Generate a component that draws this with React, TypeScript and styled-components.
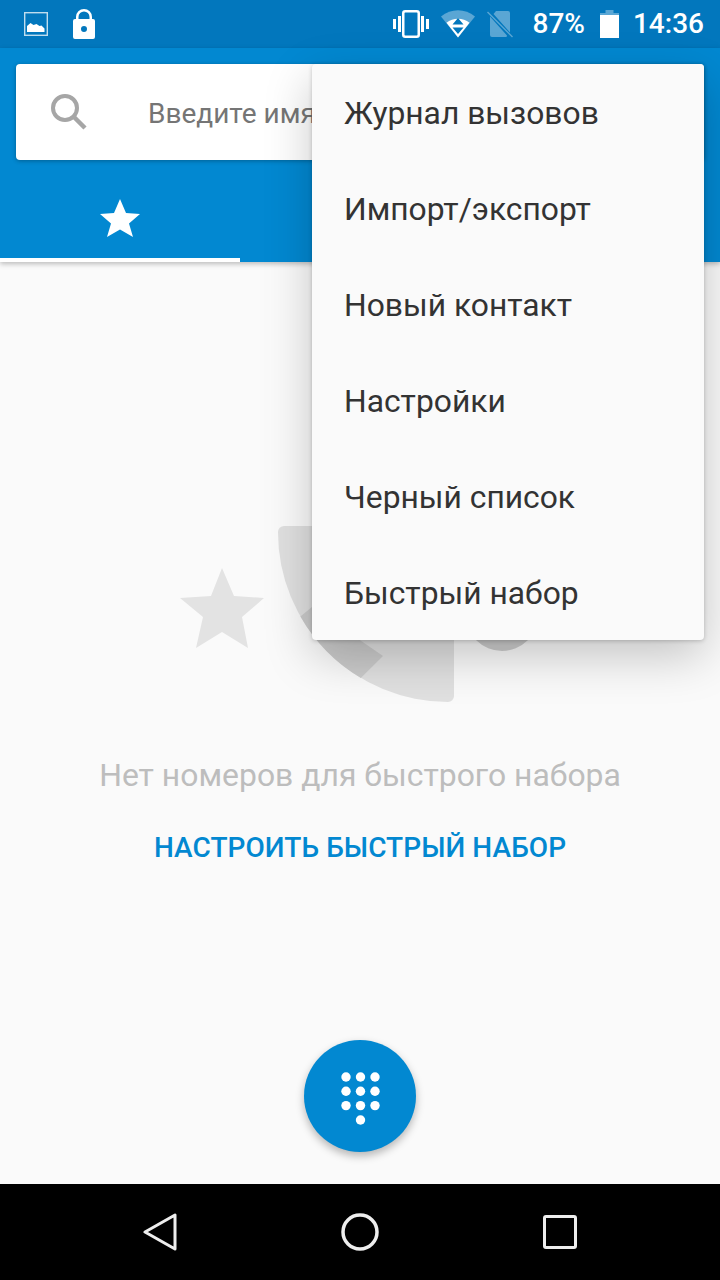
import React, { FC } from 'react';
import styled, { createGlobalStyle } from 'styled-components';

const GlobalStyle = createGlobalStyle`
  html, body {
    margin: 0;
    padding: 0;
    background: #fafafa;
  }
  * {
    box-sizing: border-box;
  }
`;

const Screen = styled.div`
  position: relative;
  display: flex;
  flex-direction: column;
  width: 720px;
  height: 1280px;
  overflow: hidden;
  background: #fafafa;
  font-family: Roboto, "Noto Sans", sans-serif;
`;

const StatusBar = styled.div`
  display: flex;
  align-items: center;
  justify-content: space-between;
  flex: none;
  height: 48px;
  padding: 0 13px 0 24px;
  background: #0277bd;
  color: #fff;
`;

const StatusGroup = styled.div<{ $gap: number }>`
  display: flex;
  align-items: center;
  gap: ${(p) => p.$gap}px;
`;

const StatusText = styled.span<{ $left: number }>`
  margin: 0 3px 0 ${(p) => p.$left}px;
  font-size: 28px;
  font-weight: 500;
  line-height: 48px;
`;

const Header = styled.header`
  position: relative;
  z-index: 1;
  flex: none;
  height: 214px;
  padding-top: 16px;
  background: #0288d1;
  box-shadow: 0 2px 5px rgba(0, 0, 0, 0.25);
`;

const SearchBox = styled.div`
  display: flex;
  align-items: center;
  height: 96px;
  margin: 0 16px;
  padding-left: 35px;
  border-radius: 4px;
  background: #fff;
  box-shadow: 0 1px 4px rgba(0, 0, 0, 0.3);
`;

const SearchHint = styled.span`
  margin-left: 61px;
  padding-top: 2px;
  font-size: 28px;
  color: #757575;
  white-space: nowrap;
`;

const Tabs = styled.div`
  display: grid;
  grid-template-columns: repeat(3, 240px);
  height: 102px;
`;

const Tab = styled.div<{ $active?: boolean }>`
  display: flex;
  align-items: center;
  justify-content: center;
  padding-top: 18px;
  border-bottom: 4px solid ${(p) => (p.$active ? '#fff' : 'transparent')};
`;

const Content = styled.main`
  display: flex;
  flex: 1;
  flex-direction: column;
  align-items: center;
  padding-top: 264px;
`;

const EmptyText = styled.p`
  margin: 49px 0 0;
  font-size: 31.9px;
  line-height: 48px;
  color: #bdbdbd;
`;

const SetupLink = styled.a`
  margin-top: 25px;
  font-size: 28px;
  font-weight: 500;
  line-height: 48px;
  letter-spacing: 0.06px;
  color: #0288d1;
`;

const Fab = styled.button`
  position: absolute;
  left: 304px;
  top: 1040px;
  display: flex;
  align-items: center;
  justify-content: center;
  width: 112px;
  height: 112px;
  padding: 5px 0 0;
  border: 0;
  border-radius: 50%;
  background: #0288d1;
  box-shadow: 0 4px 8px rgba(0, 0, 0, 0.28);
`;

const NavBar = styled.nav`
  display: grid;
  flex: none;
  grid-template-columns: 80px 1fr 80px;
  align-items: center;
  justify-items: center;
  height: 96px;
  padding: 0 120px;
  background: #000;
`;

const Menu = styled.ul`
  position: absolute;
  z-index: 2;
  left: 312px;
  top: 64px;
  width: 392px;
  margin: 0;
  padding: 0;
  list-style: none;
  border-radius: 4px;
  background: #fafafa;
  box-shadow: 0 16px 48px rgba(0, 0, 0, 0.22), 0 1px 4px rgba(0, 0, 0, 0.2);
`;

const MenuItem = styled.li`
  height: 96px;
  padding-left: 32px;
  font-size: 31.8px;
  line-height: 98px;
  color: #333;
`;

const menuItems = [
  'Журнал вызовов',
  'Импорт/экспорт',
  'Новый контакт',
  'Настройки',
  'Черный список',
  'Быстрый набор',
];

const ImageIcon: FC = () => (
  <svg width="24" height="24" viewBox="0 0 24 24">
    <rect x="0.7" y="0.7" width="22.6" height="22.6" fill="none" stroke="#fff" strokeOpacity="0.75" strokeWidth="1.4" />
    <path d="M3 20v-6l3.500-3 3 2 3-1 3 2 2-.5 3 3v3.500z" fill="#fff" />
  </svg>
);

const LockIcon: FC = () => (
  <svg width="22" height="30" viewBox="0 0 22 30">
    <path
      fillRule="evenodd"
      fill="#fff"
      d="M3 10V8a8 8 0 0 1 16 0v2h1a2 2 0 0 1 2 2v16a2 2 0 0 1-2 2H2a2 2 0 0 1-2-2V12a2 2 0 0 1 2-2zM5.500 10h11V8a5.500 5.500 0 0 0-11 0zM11 17a3 3 0 1 0 0 6 3 3 0 0 0 0-6z"
    />
  </svg>
);

const VibrateIcon: FC = () => (
  <svg width="36" height="28" viewBox="0 0 36 28" fill="#fff">
    <rect x="0" y="9" width="3" height="10" />
    <rect x="5" y="6" width="3" height="16" />
    <rect x="28" y="6" width="3" height="16" />
    <rect x="33" y="9" width="3" height="10" />
    <rect x="10.250" y="1.250" width="15.500" height="25.500" rx="2" fill="none" stroke="#fff" strokeWidth="2.500" />
  </svg>
);

const WifiIcon: FC = () => (
  <svg width="34" height="28" viewBox="0 0 34 28">
    <path d="M0 6.500C10 -2 24 -2 34 6.500L17 27.500z" fill="#fff" fillOpacity="0.35" />
    <path d="M5.500 12.700C12 7.300 22 7.300 28.500 12.700L17 27.500z" fill="#fff" />
    <path d="M17 8l5.500 6.500H11.500zM17 24l-5.500-6.500h11z" fill="#0277bd" />
  </svg>
);

const NoSimIcon: FC = () => (
  <svg width="26" height="28" viewBox="0 0 26 28">
    <path d="M9 1h12a2 2 0 0 1 2 2v19.500L6.500 4z M3 6.500L20 25.500 19.500 27H5a2 2 0 0 1-2-2z" fill="#fff" fillOpacity="0.35" />
    <path d="M0.500 2l25 25" stroke="#fff" strokeOpacity="0.35" strokeWidth="1.500" />
  </svg>
);

const BatteryIcon: FC = () => (
  <svg width="19" height="28" viewBox="0 0 19 28">
    <path d="M5.500 0h8v3h5.500v25H0V3h5.500z" fill="#fff" fillOpacity="0.35" />
    <rect x="0" y="5" width="19" height="23" fill="#fff" />
  </svg>
);

const SearchIcon: FC = () => (
  <svg width="36" height="36" viewBox="0 0 36 36" fill="none" stroke="#a6a6a6">
    <circle cx="14" cy="14" r="12" strokeWidth="4" />
    <path d="M23 23l11 11" strokeWidth="4.500" />
  </svg>
);

const StarIcon: FC = () => (
  <svg width="40" height="38" viewBox="0 0 40 38">
    <path d="M20 0l6 14 14 1-11 9.500L33 38 20 30.500 7 38l4-13.500L0 15l14-1z" fill="#fff" />
  </svg>
);

const EmptyArt: FC = () => (
  <svg width="360" height="176" viewBox="0 0 360 176">
    <path d="M42 42L31 70 0 72 23 91 16 122 42 106 68 122 62 91 84 72 54 70z" fill="#e3e3e3" />
    <path d="M98 6a6 6 0 0 1 6-6H274V170a6 6 0 0 1-6 6A170 170 0 0 1 98 6z" fill="#e0e0e0" />
    <path d="M120.400 90.500A170 170 0 0 0 180.800 152L203 130 132 81z" fill="#cbcbcb" />
    <circle cx="322" cy="89" r="36" fill="#cdcdcd" />
  </svg>
);

const DialpadIcon: FC = () => (
  <svg width="39" height="53" viewBox="0 0 39 53" fill="#fff">
    {[5, 19.5, 34].flatMap((cx) =>
      [5, 19.300, 33.600].map((cy) => <circle key={`${cx}-${cy}`} cx={cx} cy={cy} r="4.700" />),
    )}
    <circle cx="19.500" cy="48" r="4.700" />
  </svg>
);

const BackIcon: FC = () => (
  <svg width="34" height="38" viewBox="0 0 34 38" fill="none" stroke="#eee" strokeWidth="3" strokeLinejoin="round">
    <path d="M2 19L32 2v34z" />
  </svg>
);

const HomeIcon: FC = () => (
  <svg width="38" height="38" viewBox="0 0 38 38" fill="none" stroke="#eee" strokeWidth="3.500">
    <circle cx="19" cy="19" r="17" />
  </svg>
);

const RecentIcon: FC = () => (
  <svg width="34" height="34" viewBox="0 0 34 34" fill="none" stroke="#eee" strokeWidth="3">
    <rect x="1.500" y="1.500" width="31" height="31" rx="1.500" />
  </svg>
);

const App: FC = () => (
  <Screen>
    <GlobalStyle />
    <StatusBar>
      <StatusGroup $gap={25}>
        <ImageIcon />
        <LockIcon />
      </StatusGroup>
      <StatusGroup $gap={12}>
        <VibrateIcon />
        <WifiIcon />
        <NoSimIcon />
        <StatusText $left={8}>87%</StatusText>
        <BatteryIcon />
        <StatusText $left={2}>14:36</StatusText>
      </StatusGroup>
    </StatusBar>
    <Header>
      <SearchBox>
        <SearchIcon />
        <SearchHint>Введите имя</SearchHint>
      </SearchBox>
      <Tabs>
        <Tab $active>
          <StarIcon />
        </Tab>
        <Tab />
        <Tab />
      </Tabs>
    </Header>
    <Content>
      <EmptyArt />
      <EmptyText>Нет номеров для быстрого набора</EmptyText>
      <SetupLink>НАСТРОИТЬ БЫСТРЫЙ НАБОР</SetupLink>
    </Content>
    <NavBar>
      <BackIcon />
      <HomeIcon />
      <RecentIcon />
    </NavBar>
    <Fab>
      <DialpadIcon />
    </Fab>
    <Menu>
      {menuItems.map((item) => (
        <MenuItem key={item}>{item}</MenuItem>
      ))}
    </Menu>
  </Screen>
);

export default App;
